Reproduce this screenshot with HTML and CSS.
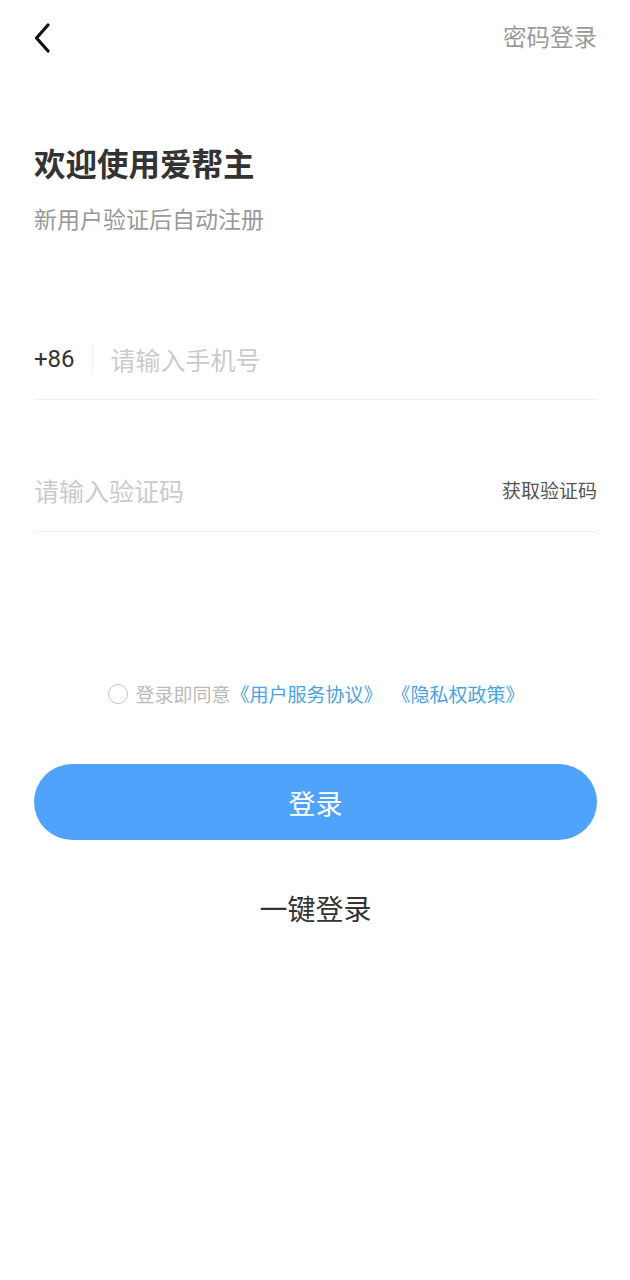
FILE: index.html
```html
<!DOCTYPE html>
<html lang="zh">
<head>
<meta charset="utf-8">
<title>登录</title>
<link rel="stylesheet" href="styles.css">
</head>
<body>
<div class="page">
  <header class="topbar">
    <span class="back">
      <svg width="16" height="30" viewBox="0 0 16 30"><path d="M14 2 L2.5 15 L14 28" fill="none" stroke="#111" stroke-width="3.2" stroke-linecap="round" stroke-linejoin="round"/></svg>
    </span>
    <span class="pwd-login">密码登录</span>
  </header>

  <section class="intro">
    <h1 class="title">欢迎使用爱帮主</h1>
    <p class="subtitle">新用户验证后自动注册</p>
  </section>

  <section class="form">
    <div class="field field-phone">
      <span class="code">+86</span>
      <span class="divider"></span>
      <span class="placeholder">请输入手机号</span>
    </div>
    <div class="field field-code">
      <span class="placeholder">请输入验证码</span>
      <span class="get-code">获取验证码</span>
    </div>
  </section>

  <div class="agree">
    <span class="radio"></span>
    <span class="agree-text">登录即同意</span>
    <span class="link">《用户服务协议》</span>
    <span class="link link-2">《隐私权政策》</span>
  </div>

  <div class="btn-login">登录</div>
  <div class="one-key">一键登录</div>
</div>
</body>
</html>
```

FILE: styles.css
```css
* { box-sizing: border-box; margin: 0; padding: 0; }
html, body { background: #fff; }
body {
  font-family: "Noto Sans CJK SC", "Noto Sans", sans-serif;
  width: 630px;
  height: 1280px;
  overflow: hidden;
}
.page { padding: 0 33px 0 34px; }

.topbar {
  height: 76px;
  display: flex;
  align-items: center;
  justify-content: space-between;
}
.back { display: flex; align-items: center; width: 16px; height: 30px; margin-top: -1px; }
.pwd-login { font-size: 23.5px; color: #9a9a9a; line-height: 1; margin-top: -3px; }

.intro { padding-top: 68px; }
.title {
  font-size: 31.5px;
  font-weight: 700;
  color: #333;
  line-height: 36px;
}
.subtitle {
  margin-top: 23px;
  font-size: 23px;
  color: #999;
  line-height: 30px;
}

.form { margin-top: 93px; }
.field {
  display: flex;
  border-bottom: 1px solid #f0f0f0;
}
.field-phone { height: 74px; align-items: flex-start; padding-top: 18px; }
.code { font-family: "Roboto", "Noto Sans", sans-serif; font-size: 24px; color: #333; line-height: 30px; }
.divider { width: 1px; height: 28px; background: #eee; margin: 1px 18px 0 17px; }
.placeholder { font-size: 25px; color: #cbcbcb; line-height: 30px; }
.field-code { height: 132px; padding-top: 48px; align-items: center; justify-content: space-between; }
.get-code { font-size: 19px; color: #555; line-height: 24px; }

.agree {
  margin-top: 148px;
  display: flex;
  align-items: center;
  justify-content: center;
  height: 28px;
  font-size: 19px;
  line-height: 28px;
  padding-left: 2px;
}
.radio {
  width: 20px;
  height: 20px;
  border: 1.5px solid #c4c4c4;
  border-radius: 50%;
  margin-right: 7px;
}
.agree-text { color: #bbb; }
.link { color: #4aa3e2; }
.link-2 { margin-left: 9px; }

.btn-login {
  margin-top: 56px;
  height: 76px;
  border-radius: 38px;
  background: #4fa3fc;
  color: #fff;
  font-size: 27px;
  display: flex;
  align-items: center;
  justify-content: center;
  line-height: 1;
}
.one-key {
  margin-top: 52px;
  text-align: center;
  font-size: 28px;
  color: #333;
  line-height: 32px;
}
```
